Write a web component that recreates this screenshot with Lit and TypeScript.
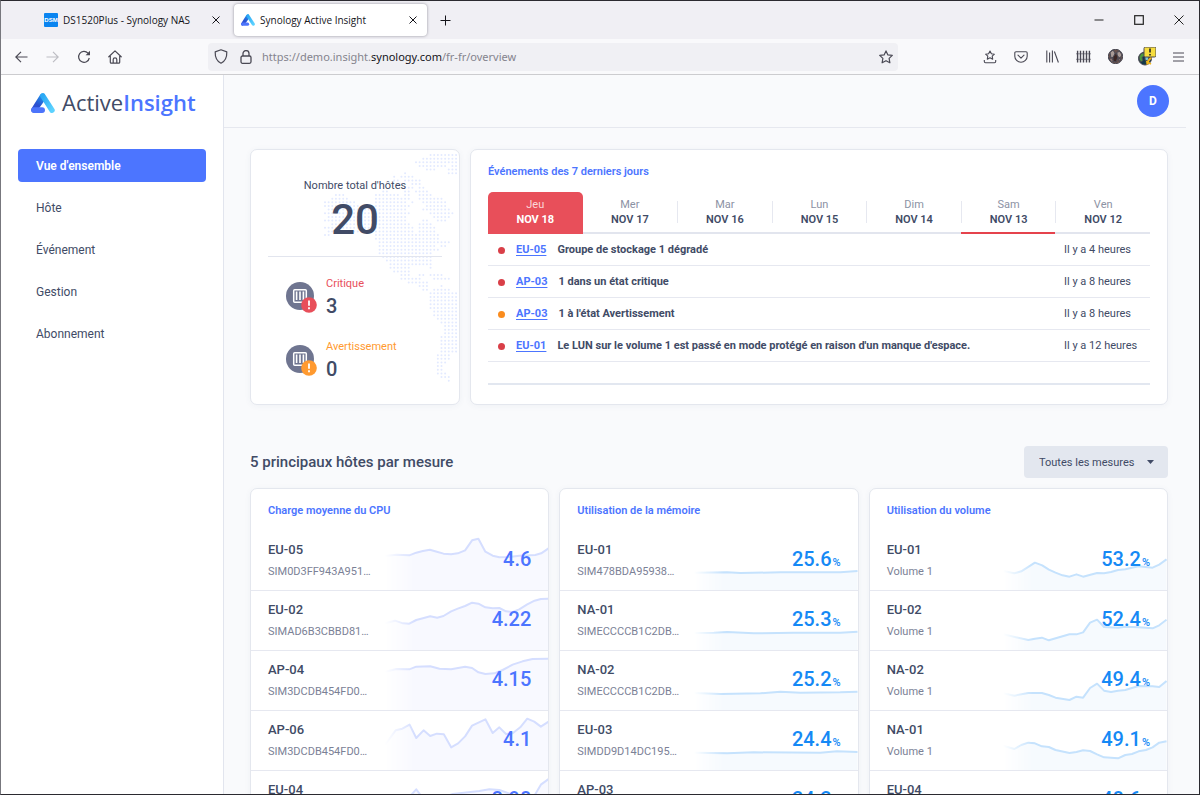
import { LitElement, html, svg, css } from "lit";
import { customElement, property, state } from "lit/decorators.js";
import { classMap } from "lit/directives/class-map.js";

type Point = [number, number];

interface HostMetric {
  host: string;
  detail: string;
  value: string;
  unit: string;
  trend: Point[];
}

interface HostEvent {
  level: "critical" | "warning";
  host: string;
  message: string;
  time: string;
}

const DAYS = [
  { name: "Jeu", date: "NOV 18", alert: true },
  { name: "Mer", date: "NOV 17", alert: false },
  { name: "Mar", date: "NOV 16", alert: false },
  { name: "Lun", date: "NOV 15", alert: false },
  { name: "Dim", date: "NOV 14", alert: false },
  { name: "Sam", date: "NOV 13", alert: true },
  { name: "Ven", date: "NOV 12", alert: false },
];

const EVENTS: HostEvent[] = [
  { level: "critical", host: "EU-05", message: "Groupe de stockage 1 dégradé", time: "Il y a 4 heures" },
  { level: "critical", host: "AP-03", message: "1 dans un état critique", time: "Il y a 8 heures" },
  { level: "warning", host: "AP-03", message: "1 à l'état Avertissement", time: "Il y a 8 heures" },
  {
    level: "critical",
    host: "EU-01",
    message: "Le LUN sur le volume 1 est passé en mode protégé en raison d'un manque d'espace.",
    time: "Il y a 12 heures",
  },
];

/* Trend coordinates live in a 492 x 177 box. */
const CPU: HostMetric[] = [
  {
    host: "EU-05", detail: "SIM0D3FF943A951…", value: "4.6", unit: "",
    trend: [[0, 75], [34, 71], [73, 73], [94, 65], [114, 60], [135, 56], [156, 62], [176, 68], [199, 70], [219, 67], [241, 58], [262, 28], [281, 23], [302, 62], [324, 74], [344, 79], [374, 78], [404, 74], [434, 73], [452, 72], [470, 67], [492, 52]],
  },
  {
    host: "EU-02", detail: "SIMAD6B3CBBD81…", value: "4.22", unit: "",
    trend: [[0, 97], [30, 89], [54, 97], [73, 98], [94, 87], [114, 82], [136, 76], [157, 80], [176, 75], [199, 61], [219, 53], [241, 45], [262, 35], [281, 38], [302, 49], [324, 52], [344, 51], [364, 61], [384, 63], [404, 55], [428, 40], [450, 29], [469, 24], [492, 23]],
  },
  {
    host: "AP-04", detail: "SIM3DCDB454FD0…", value: "4.15", unit: "",
    trend: [[0, 62], [34, 54], [73, 55], [94, 47], [136, 46], [164, 53], [199, 55], [241, 47], [262, 51], [281, 64], [302, 69], [329, 67], [354, 57], [384, 41], [414, 31], [444, 24], [492, 23]],
  },
  {
    host: "AP-06", detail: "SIM3DCDB454FD0…", value: "4.1", unit: "",
    trend: [[0, 101], [32, 58], [52, 53], [74, 41], [94, 81], [116, 58], [136, 75], [156, 68], [177, 70], [199, 109], [220, 97], [241, 76], [262, 44], [302, 25], [324, 66], [344, 49], [364, 69], [384, 67], [407, 49], [428, 23], [449, 32], [469, 47], [492, 32]],
  },
  {
    host: "EU-04", detail: "SIM1F6A20C7E3B9…", value: "3.98", unit: "",
    trend: [[0, 87], [74, 77], [94, 55], [109, 75], [164, 82], [204, 69], [284, 60], [314, 55], [344, 57], [384, 71], [424, 87], [449, 75], [469, 41], [492, 24]],
  },
];

const MEMORY: HostMetric[] = [
  { host: "EU-01", detail: "SIM478BDA95938…", value: "25.6", unit: "%", trend: [[0, 125], [100, 124], [140, 126], [260, 124], [440, 124], [492, 120]] },
  { host: "NA-01", detail: "SIMECCCCB1C2DB…", value: "25.3", unit: "%", trend: [[0, 126], [60, 125], [100, 123], [180, 127], [300, 125], [440, 125], [492, 122]] },
  { host: "NA-02", detail: "SIMECCCCB1C2DB…", value: "25.2", unit: "%", trend: [[0, 126], [80, 129], [200, 127], [260, 122], [320, 125], [440, 124], [492, 122]] },
  { host: "EU-03", detail: "SIMDD9D14DC195…", value: "24.4", unit: "%", trend: [[0, 125], [100, 127], [180, 124], [380, 125], [430, 121], [492, 123]] },
  { host: "AP-03", detail: "SIM90B2E6A14CF7…", value: "24.2", unit: "%", trend: [[0, 125], [492, 123]] },
];

const VOLUME: HostMetric[] = [
  {
    host: "EU-01", detail: "Volume 1", value: "53.2", unit: "%",
    trend: [[0, 120], [34, 127], [55, 121], [96, 95], [118, 103], [138, 116], [158, 125], [179, 133], [200, 137], [221, 130], [241, 137], [263, 131], [283, 126], [304, 127], [325, 123], [346, 117], [368, 115], [408, 106], [450, 110], [470, 101], [492, 85]],
  },
  {
    host: "EU-02", detail: "Volume 1", value: "52.4", unit: "%",
    trend: [[0, 130], [76, 147], [96, 143], [117, 140], [138, 148], [200, 130], [221, 130], [241, 124], [262, 95], [283, 86], [304, 108], [346, 110], [368, 107], [408, 109], [450, 112], [470, 103], [492, 86]],
  },
  {
    host: "NA-02", detail: "Volume 1", value: "49.4", unit: "%",
    trend: [[0, 127], [34, 134], [76, 126], [117, 126], [138, 132], [158, 140], [200, 147], [221, 137], [241, 140], [262, 111], [283, 98], [304, 119], [325, 123], [346, 119], [368, 117], [408, 105], [450, 106], [470, 108], [492, 90]],
  },
  {
    host: "NA-01", detail: "Volume 1", value: "49.1", unit: "%",
    trend: [[0, 104], [34, 114], [55, 102], [76, 95], [96, 97], [117, 106], [138, 108], [158, 117], [200, 126], [221, 123], [241, 118], [262, 120], [283, 130], [304, 139], [346, 142], [368, 132], [388, 129], [408, 121], [430, 117], [450, 109], [470, 95], [492, 91]],
  },
  { host: "EU-04", detail: "Volume 1", value: "48.6", unit: "%", trend: [[0, 110], [200, 130], [492, 90]] },
];

/* Dotted Americas: for every row, the inclusive column spans that hold dots. */
const MAP_ROWS: number[][] = [
  [29, 36], [27, 36], [25, 36], [26, 33, 35, 36], [28, 30, 34, 36], [22, 22, 34, 36],
  [19, 19, 21, 24], [19, 20, 22, 26], [20, 21, 24, 26], [22, 24, 26, 27], [16, 17, 22, 23, 25, 28],
  [3, 5, 14, 20, 22, 23, 26, 29], [2, 6, 14, 23, 26, 32], [0, 8, 14, 22, 24, 24, 27, 33],
  [0, 12, 14, 23, 28, 33], [1, 22, 27, 34], [0, 23, 29, 35], [1, 22, 30, 34], [0, 22, 27, 28, 31, 33],
  [2, 23, 26, 29], [0, 24, 26, 30], [1, 2, 8, 24, 26, 30], [0, 1, 14, 31], [14, 31], [15, 34],
  [15, 30, 32, 33], [15, 31], [15, 29], [16, 29], [17, 29], [18, 29], [18, 23, 29, 29], [19, 23],
  [21, 23, 26, 27, 29, 32], [21, 26, 30, 34], [23, 28], [26, 28, 32, 32], [27, 28, 30, 34],
  [29, 36], [29, 36], [29, 36], [29, 36], [29, 36], [30, 36], [30, 36], [31, 36], [32, 36],
  [33, 36], [33, 36], [33, 36], [32, 36], [32, 36], [32, 36], [32, 36], [32, 36], [31, 34],
  [31, 34], [31, 33], [31, 32], [31, 32], [31, 33], [32, 34], [34, 34],
];

const mapDots = (): string => {
  const pitch = 3.64;
  let d = "";
  MAP_ROWS.forEach((spans, row) => {
    for (let s = 0; s < spans.length; s += 2) {
      for (let col = spans[s]; col <= spans[s + 1]; col++) {
        d += `M${(col * pitch + 1).toFixed(2)} ${(row * pitch + 1).toFixed(2)}h.01`;
      }
    }
  });
  return d;
};

const brandMark = (id: string) => html`
  <svg class="brand-mark" viewBox="0 0 24 20" aria-hidden="true">
    <defs>
      <linearGradient id="${id}-l" x1="0.7" y1="0" x2="0.3" y2="1">
        <stop offset="0" stop-color="#1f9bf0"></stop>
        <stop offset="0.6" stop-color="#2a4fd0"></stop>
        <stop offset="1" stop-color="#3453d8"></stop>
      </linearGradient>
      <linearGradient id="${id}-r" x1="0" y1="0" x2="1" y2="1">
        <stop offset="0" stop-color="#2ba9f5"></stop>
        <stop offset="1" stop-color="#5cd2ff"></stop>
      </linearGradient>
    </defs>
    <path d="M9.3 1.6C10.2 0 12.6-.3 13.8 1.2L14 7 8.6 14.4 2.6 19.8C.4 19.3-.4 17.3.5 15.6z" fill="url(#${id}-l)"></path>
    <path d="M12 3.1 21 17.2" fill="none" stroke="url(#${id}-r)" stroke-width="5.4" stroke-linecap="round"></path>
    <rect x="0.2" y="14.2" width="13.8" height="5.8" rx="2.9" fill="#4c74fb"></rect>
  </svg>
`;

@customElement("browser-chrome")
export class BrowserChrome extends LitElement {
  @state() private address = "https://demo.insight.synology.com/fr-fr/overview";

  static styles = css`
    :host {
      display: block;
      font-family: "Open Sans", "Noto Sans", sans-serif;
      color: #15141a;
    }
    button {
      border: 0;
      padding: 0;
      background: none;
      color: inherit;
      font: inherit;
      display: grid;
      place-items: center;
    }
    svg {
      display: block;
      fill: none;
      stroke: currentColor;
    }
    .tabs {
      display: flex;
      align-items: center;
      height: 38px;
      background: #f0eff4;
      padding-left: 36px;
    }
    .tab {
      display: flex;
      align-items: center;
      box-sizing: border-box;
      width: 193px;
      height: 32px;
      padding: 0 7px;
      gap: 5px;
      border-radius: 4px;
    }
    .tab.active {
      background: #fff;
      box-shadow: 0 0 3px rgba(80, 80, 95, 0.6);
    }
    .tab-title {
      flex: 1;
      white-space: nowrap;
      font-size: 10px;
      text-align: left;
    }
    .first {
      margin-right: 4px;
    }
    .dsm {
      width: 14px;
      height: 14px;
      border-radius: 1px;
      background: #0a84f0;
      color: #fff;
      font: 700 6px/14px "Liberation Sans", sans-serif;
      text-align: center;
    }
    .brand-mark {
      width: 14px;
      height: 12px;
      stroke: none;
    }
    .tab-close {
      width: 14px;
      height: 20px;
    }
    .new-tab {
      width: 36px;
      height: 32px;
    }
    .window-buttons {
      margin-left: auto;
      display: flex;
      color: #222;
    }
    .window-buttons button {
      width: 40px;
      height: 38px;
    }
    .toolbar {
      display: flex;
      align-items: center;
      height: 35px;
      background: #f9f9fb;
      border-bottom: 1px solid #cccccf;
      color: #4a4954;
    }
    .nav {
      display: flex;
      padding-left: 5px;
    }
    .nav button {
      width: 31px;
      height: 28px;
    }
    .nav button:disabled {
      color: #bdbdc3;
    }
    .address {
      display: flex;
      align-items: center;
      flex: 0 1 690px;
      margin-left: 78px;
      height: 28px;
      border-radius: 4px;
      background: #f0f0f4;
    }
    .address button {
      width: 25px;
      height: 28px;
    }
    .url {
      flex: 1;
      display: grid;
      align-items: center;
      margin-left: 4px;
      padding-top: 1px;
      font-family: "Noto Sans", "Open Sans", sans-serif;
      font-size: 11px;
      color: #85848e;
    }
    .url > * {
      grid-area: 1 / 1;
    }
    .url input {
      width: 100%;
      border: 0;
      padding: 0;
      background: transparent;
      font: inherit;
      color: transparent;
      outline: 0;
    }
    .url span {
      pointer-events: none;
      white-space: nowrap;
    }
    .url b {
      font-weight: 400;
      color: #15141a;
    }
    .tools {
      margin-left: auto;
      display: flex;
      width: 220px;
      padding-right: 5px;
    }
    .tools button {
      flex: 1;
      height: 28px;
    }
  `;

  render() {
    return html`
      <div class="tabs">
        <div class="tab first">
          <span class="dsm">DSM</span>
          <span class="tab-title">DS1520Plus - Synology NAS</span>
          <button class="tab-close" aria-label="Fermer l'onglet">
            <svg width="8" height="8" viewBox="0 0 8 8"><path d="M.5.5l7 7M7.500.5l-7 7"></path></svg>
          </button>
        </div>
        <div class="tab active">
          ${brandMark("tab")}
          <span class="tab-title">Synology Active Insight</span>
          <button class="tab-close" aria-label="Fermer l'onglet">
            <svg width="8" height="8" viewBox="0 0 8 8"><path d="M.5.5l7 7M7.500.5l-7 7"></path></svg>
          </button>
        </div>
        <button class="new-tab" aria-label="Nouvel onglet">
          <svg width="11" height="11" viewBox="0 0 11 11" stroke="#444"><path d="M5.500.5v10M.5 5.500h10"></path></svg>
        </button>
        <div class="window-buttons">
          <button aria-label="Réduire"><svg width="10" height="10" viewBox="0 0 10 10"><path d="M.5 5h9"></path></svg></button>
          <button aria-label="Agrandir">
            <svg width="10" height="10" viewBox="0 0 10 10"><rect x=".7" y=".7" width="8.600" height="8.600" stroke-width="1.200"></rect></svg>
          </button>
          <button aria-label="Fermer"><svg width="10" height="10" viewBox="0 0 10 10"><path d="M.5.5l9 9M9.500.5l-9 9"></path></svg></button>
        </div>
      </div>
      <div class="toolbar">
        <div class="nav">
          <button aria-label="Précédent">
            <svg width="13" height="12" viewBox="0 0 13 12" stroke-width="1.200"><path d="M12.500 6H1M6 .8.8 6 6 11.200"></path></svg>
          </button>
          <button aria-label="Suivant" disabled>
            <svg width="13" height="12" viewBox="0 0 13 12" stroke-width="1.200"><path d="M.5 6H12M7 .8 12.200 6 7 11.200"></path></svg>
          </button>
          <button aria-label="Actualiser">
            <svg width="14" height="14" viewBox="0 0 14 14" stroke-width="1.200">
              <path d="M12.300 8A5.400 5.400 0 1 1 11 3.200L12.500 4.600"></path><path d="M13 .8v4.500H8.600z" fill="currentColor" stroke="none"></path>
            </svg>
          </button>
          <button aria-label="Accueil">
            <svg width="14" height="14" viewBox="0 0 14 14" stroke-width="1.200" stroke-linejoin="round" stroke-linecap="round">
              <path d="M.8 6.800 7 .9l6.200 5.900M2.300 6v6.200q0 1 1 1h7.400q1 0 1-1V6M5.200 13V9.600a1.800 1.800 0 0 1 3.600 0V13"></path>
            </svg>
          </button>
        </div>
        <div class="address">
          <button aria-label="Protection">
            <svg width="14" height="15" viewBox="0 0 14 15" stroke-width="1.200" stroke-linejoin="round">
              <path d="M7 .8 12.800 2.900C13 8.500 11.300 12 7 14.200 2.700 12 1 8.500 1.200 2.900z"></path>
            </svg>
          </button>
          <button aria-label="Sécurité">
            <svg width="12" height="14" viewBox="0 0 12 14" stroke-width="1.300">
              <rect x="1" y="6" width="10" height="7.300" rx="1.500"></rect><path d="M3 6V3.600a3 3 0 0 1 6 0V6"></path>
            </svg>
          </button>
          <label class="url">
            <span aria-hidden="true">https://demo.insight.<b>synology.com</b>/fr-fr/overview</span>
            <input aria-label="Adresse" .value=${this.address} />
          </label>
          <button aria-label="Marquer cette page">
            <svg width="14" height="14" viewBox="0 0 14 14" stroke-width="1.200" stroke-linejoin="round">
              <path d="M7 .9 8.900 4.900l4.400.5-3.200 3 .8 4.400L7 10.700l-3.900 2.100.8-4.400-3.200-3 4.400-.5z"></path>
            </svg>
          </button>
        </div>
        <div class="tools">
          <button aria-label="Marque-pages">
            <svg width="14" height="14" viewBox="0 0 14 14" stroke-width="1.100" stroke-linejoin="round">
              <path d="M7 1l1.400 2.800 3 .4L9.200 6.200l.5 3L7 7.800 4.300 9.200l.5-3L2.600 4.200l3-.4zM1.300 10v1.500q0 1.200 1.200 1.200h9q1.200 0 1.200-1.200V10"></path>
            </svg>
          </button>
          <button aria-label="Pocket">
            <svg width="14" height="12" viewBox="0 0 14 12" stroke-width="1.100" stroke-linecap="round" stroke-linejoin="round">
              <path d="M2 .8h10q1.200 0 1.200 1.200v3.200A6.200 6 0 0 1 .8 5.200V2Q.8.8 2 .8zM4 4.200l3 2.900 3-2.900"></path>
            </svg>
          </button>
          <button aria-label="Bibliothèque">
            <svg width="13" height="13" viewBox="0 0 13 13" stroke-width="1.100"><path d="M.8.5v12M3.600 2.500v10M6.400.5v12M8.400 1.500l4 11"></path></svg>
          </button>
          <button aria-label="Clôture">
            <svg width="15" height="13" viewBox="0 0 15 13">
              <path d="M1.600.8v11.700M4.500.8v11.700M7.500.8v11.700M10.500.8v11.700M13.400.8v11.700" stroke-width="1.400"></path><path d="M0 3.800h15M0 9.300h15" stroke-width=".6"></path>
            </svg>
          </button>
          <button aria-label="Profil">
            <svg width="15" height="15" viewBox="0 0 15 15" stroke="none">
              <circle cx="7.500" cy="7.500" r="7.200" fill="#66504c"></circle>
              <path d="M2 3.500 5 1l2 3-1 4-3 1zM9 3l3-.5 2 3.500-2 3-3-2z" fill="#a99a96"></path>
              <path d="M5 8l3-4 2 4-2 5-3-1z" fill="#3c2624"></path>
              <path d="M.8 9.500l3-.5 1.500 3-1.500 1.500zM10 10l3-1-1.500 3.500z" fill="#8d7570"></path>
            </svg>
          </button>
          <button aria-label="Extension, avertissement">
            <svg width="19" height="19" viewBox="0 0 19 19" stroke="none">
              <circle cx="8" cy="11.500" r="6.500" fill="#12384a"></circle>
              <path d="M2 10q1-4 5-4.500l1 3-3 2 1 3-2 1.500q-2-2-2-5z" fill="#4b9a3e"></path>
              <path d="M8 9l4 1-1 4-3-1z" fill="#7ec8d8"></path>
              <path d="M10 17.500q1.500-5 4.500-7.500" stroke="#f2b81b" stroke-width="2" fill="none"></path>
              <path d="M9 14.500l5 2.500" stroke="#f2b81b" stroke-width="1.600"></path>
              <rect x="7" y="0" width="12" height="10" rx="1.500" fill="#f7dd3d"></rect>
              <path d="M13 1.500v4M13 7v1.500" stroke="#222" stroke-width="1.600"></path>
            </svg>
          </button>
          <button aria-label="Menu">
            <svg width="11" height="10" viewBox="0 0 11 10"><path d="M0 1h11M0 5h11M0 9h11"></path></svg>
          </button>
        </div>
      </div>
    `;
  }
}

@customElement("metric-card")
export class MetricCard extends LitElement {
  @property() heading = "";
  @property() tone = "indigo";
  @property({ attribute: false }) hosts: HostMetric[] = [];

  static styles = css`
    :host {
      display: block;
      overflow: hidden;
      background: #fff;
      border: 1px solid #e4e7ee;
      border-radius: 7px;
      box-shadow: 0 1px 6px rgba(60, 70, 110, 0.05);
    }
    .indigo {
      --value: #4c75ff;
      --line: #d5deff;
      --area: #f8f9ff;
    }
    .azure {
      --value: #1589f5;
      --line: #c5e2fd;
      --area: #f6fafe;
    }
    h3 {
      margin: 0;
      padding: 14px 17px 12px;
      font-size: 11px;
      font-weight: 600;
      line-height: 16px;
      color: #4c75ff;
    }
    ul {
      list-style: none;
      margin: 0;
      padding: 0;
    }
    li {
      display: grid;
      grid-template-columns: 1fr auto;
      align-items: center;
      isolation: isolate;
      box-sizing: border-box;
      height: 60px;
      border-bottom: 1px solid #e6e8f0;
    }
    .trend {
      grid-area: 1 / 1 / 2 / 3;
      z-index: -1;
      justify-self: end;
      display: block;
      width: 55%;
      height: 59px;
      fill: none;
      -webkit-mask-image: linear-gradient(to right, transparent, #000 18%);
      mask-image: linear-gradient(to right, transparent, #000 18%);
    }
    .line {
      stroke: var(--line);
      stroke-width: 2;
      stroke-linejoin: round;
      vector-effect: non-scaling-stroke;
    }
    .area {
      fill: var(--area);
    }
    .label {
      grid-area: 1 / 1;
      padding-left: 17px;
    }
    .host {
      font-size: 13px;
      font-weight: 500;
      line-height: 18px;
      color: #414b66;
    }
    .detail {
      margin-top: 5px;
      font-size: 11px;
      line-height: 16px;
      color: #7b8196;
    }
    .value {
      grid-area: 1 / 2;
      padding: 0 17px 3px 0;
      font-size: 20px;
      line-height: 24px;
      font-weight: 500;
      color: var(--value);
    }
    .unit {
      margin-left: 1px;
      font-size: 11px;
      line-height: 12px;
    }
  `;

  private trend(points: Point[]) {
    const line = points.map(([x, y]) => `${x} ${y}`).join("L");
    return svg`
      <path class="area" d="M${line}V177H0z"></path>
      <path class="line" d="M${line}"></path>
    `;
  }

  render() {
    return html`
      <section class=${this.tone}>
        <h3>${this.heading}</h3>
        <ul>
          ${this.hosts.map(
            (item) => html`
              <li>
                <svg class="trend" viewBox="0 0 492 177" preserveAspectRatio="none" aria-hidden="true">${this.trend(item.trend)}</svg>
                <div class="label">
                  <div class="host">${item.host}</div>
                  <div class="detail">${item.detail}</div>
                </div>
                <div class="value">${item.value}${item.unit ? html`<span class="unit">${item.unit}</span>` : ""}</div>
              </li>
            `
          )}
        </ul>
      </section>
    `;
  }
}

@customElement("app-root")
export class AppRoot extends LitElement {
  @state() private day = 0;

  static styles = css`
    :host {
      display: flex;
      flex-direction: column;
      box-sizing: border-box;
      height: 100vh;
      overflow: hidden;
      border: 1px solid #2b2a30;
      border-left-color: #77777d;
      background: #f9fafc;
      font-family: Roboto, "Liberation Sans", sans-serif;
      font-size: 11px;
      line-height: 16px;
      color: #414b66;
    }
    button {
      border: 0;
      padding: 0;
      background: none;
      font: inherit;
      color: inherit;
    }
    browser-chrome {
      flex: none;
    }
    .page {
      flex: 1;
      min-height: 0;
      display: flex;
    }
    .sidebar {
      flex: 0 0 222px;
      background: #fff;
      border-right: 1px solid #e2e5ee;
    }
    .brand {
      display: flex;
      align-items: center;
      gap: 7px;
      height: 56px;
      padding-left: 30px;
      text-decoration: none;
      font: 500 22px/28px "Open Sans", "Noto Sans", sans-serif;
      color: #414b66;
    }
    .brand span {
      padding-bottom: 2px;
    }
    .brand strong {
      font-weight: 600;
      color: #4c75ff;
    }
    .brand-mark {
      width: 24px;
      height: 20px;
    }
    nav {
      display: flex;
      flex-direction: column;
      gap: 9px;
      padding: 18px 17px;
      font-size: 12px;
    }
    nav a {
      padding: 1px 18px 0;
      line-height: 32px;
      border-radius: 4px;
      text-decoration: none;
      color: inherit;
    }
    nav a.current {
      background: #4c75ff;
      color: #fff;
      font-weight: 600;
    }
    .main {
      flex: 1;
      min-width: 0;
      padding-right: 13px;
      overflow: hidden;
    }
    header {
      display: flex;
      justify-content: flex-end;
      align-items: center;
      height: 52px;
      padding-right: 17px;
      border-bottom: 1px solid #e6e8ef;
    }
    .avatar {
      width: 32px;
      height: 32px;
      border-radius: 50%;
      background: #4c75ff;
      color: #fff;
      font-size: 12px;
      font-weight: 700;
    }
    .content {
      padding: 21px 18px 0 26px;
    }
    .overview {
      display: grid;
      grid-template-columns: 210px 1fr;
      gap: 10px;
    }
    .card {
      box-sizing: border-box;
      min-height: 256px;
      background-color: #fff;
      border: 1px solid #e4e7ee;
      border-radius: 7px;
      box-shadow: 0 1px 6px rgba(60, 70, 110, 0.05);
      padding: 0 17px;
    }
    .totals {
      display: grid;
      grid-template-rows: 1fr;
    }
    .world {
      grid-area: 1 / 1;
      justify-self: end;
      width: 133px;
      height: 229px;
      margin: 4px -15px 0 0;
      fill: none;
      stroke: #e3eaff;
      stroke-width: 2;
      stroke-linecap: round;
    }
    .figures {
      grid-area: 1 / 1;
      padding-top: 28px;
    }
    .total {
      text-align: center;
      padding-bottom: 11px;
      border-bottom: 1px solid #e2e5ee;
    }
    .total-number {
      font-size: 42px;
      line-height: 51px;
      font-weight: 500;
    }
    .status {
      display: flex;
      align-items: center;
      gap: 9px;
      margin-top: 19px;
      padding-left: 18px;
    }
    .status + .status {
      margin-top: 21px;
    }
    .status svg {
      width: 31px;
      height: 31px;
    }
    .count {
      margin-top: 2px;
      font-size: 20px;
      line-height: 24px;
      font-weight: 500;
    }
    .critical {
      color: #e84f5a;
    }
    .warning {
      color: #ff9a30;
    }
    h2,
    h3 {
      margin: 0;
      font-weight: 500;
    }
    .events h3 {
      padding: 14px 0 12px;
      font-size: 11px;
      font-weight: 600;
      line-height: 16px;
      color: #4c75ff;
    }
    .days {
      display: grid;
      grid-template-columns: repeat(7, 1fr);
    }
    .day {
      height: 42px;
      display: flex;
      align-items: center;
      border-bottom: 2px solid #e2e5ee;
      box-sizing: border-box;
    }
    .day-text {
      flex: 1;
      text-align: center;
      font-weight: 600;
      line-height: 15px;
    }
    .day-name {
      display: block;
      font-weight: 400;
      color: #8c92a4;
    }
    .day + .day:not(.selected + .day) .day-text {
      border-left: 1px solid #e6e8f0;
      height: 22px;
      display: flex;
      flex-direction: column;
      justify-content: center;
    }
    .day.alert {
      border-bottom-color: #e5434c;
    }
    .day.selected {
      background: #e84f5a;
      border-color: #e84f5a;
      border-radius: 5px 5px 0 0;
      color: #fff;
    }
    .day.selected .day-name {
      color: #fbd5d8;
    }
    .day.selected .day-text {
      font-weight: 700;
    }
    table {
      width: 100%;
      border-collapse: collapse;
      table-layout: fixed;
    }
    .time-col {
      width: 86px;
    }
    td {
      height: 30px;
      padding: 1px 0 0;
      border-bottom: 1px solid #e6e8f0;
    }
    .event {
      display: flex;
      align-items: center;
      gap: 11px;
      padding-left: 10px;
      font-weight: 700;
      white-space: nowrap;
    }
    .event a {
      color: #4c75ff;
      text-underline-offset: 2px;
    }
    .dot {
      width: 7px;
      height: 7px;
      border-radius: 50%;
      background: #d93f48;
    }
    .dot.warn {
      background: #fa8c1e;
    }
    .list-end {
      height: 21px;
      border-bottom: 2px solid #e2e7f0;
    }
    .section-head {
      display: flex;
      align-items: center;
      justify-content: space-between;
      margin: 41px 0 10px;
    }
    h2 {
      font-size: 15px;
      line-height: 20px;
    }
    .picker {
      display: grid;
      align-items: center;
    }
    .picker > * {
      grid-area: 1 / 1;
    }
    .picker select {
      appearance: none;
      -webkit-appearance: none;
      height: 32px;
      padding: 1px 33px 0 15px;
      border: 0;
      border-radius: 4px;
      background: #e3e7ef;
      font: inherit;
      color: inherit;
    }
    .picker svg {
      justify-self: end;
      margin-right: 14px;
      width: 7px;
      height: 4px;
      fill: currentColor;
      pointer-events: none;
    }
    .metrics {
      display: grid;
      grid-template-columns: repeat(3, 1fr);
      gap: 10px;
    }
  `;

  private statusIcon(color: string) {
    return html`
      <svg viewBox="0 0 31 31" aria-hidden="true">
        <circle cx="14" cy="14" r="14" fill="#6f7590"></circle>
        <rect x="7.700" y="7.700" width="12.600" height="12.600" rx="1" fill="none" stroke="#fff" stroke-width="1.500"></rect>
        <path d="M10.600 9.500v8.500M14 9.500v8.500M17.400 9.500v8.500" stroke="#fff" stroke-width="1.600"></path>
        <circle cx="23" cy="23" r="7.800" fill=${color}></circle>
        <path d="M23 18.500v5.200M23 25.300v1.900" stroke="#fff" stroke-width="1.800"></path>
      </svg>
    `;
  }

  render() {
    return html`
      <browser-chrome></browser-chrome>
      <div class="page">
        <aside class="sidebar">
          <a class="brand" href="#overview">${brandMark("logo")}<span>Active<strong>Insight</strong></span></a>
          <nav>
            <a class="current" href="#overview" aria-current="page">Vue d'ensemble</a>
            <a href="#host">Hôte</a>
            <a href="#event">Événement</a>
            <a href="#management">Gestion</a>
            <a href="#subscription">Abonnement</a>
          </nav>
        </aside>
        <main class="main">
          <header><button class="avatar" aria-label="Compte D">D</button></header>
          <div class="content">
            <div class="overview">
              <section class="card totals">
                <svg class="world" viewBox="0 0 133 229" aria-hidden="true"><path d=${mapDots()}></path></svg>
                <div class="figures">
                  <div class="total">
                    <div>Nombre total d'hôtes</div>
                    <div class="total-number">20</div>
                  </div>
                  <div class="status">
                    ${this.statusIcon("#e84f5a")}
                    <div><div class="critical">Critique</div><div class="count">3</div></div>
                  </div>
                  <div class="status">
                    ${this.statusIcon("#ff9a30")}
                    <div><div class="warning">Avertissement</div><div class="count">0</div></div>
                  </div>
                </div>
              </section>
              <section class="card events">
                <h3>Événements des 7 derniers jours</h3>
                <div class="days">
                  ${DAYS.map(
                    (d, i) => html`
                      <button
                        class=${classMap({ day: true, alert: d.alert, selected: i === this.day })}
                        @click=${() => (this.day = i)}
                      >
                        <span class="day-text"><span class="day-name">${d.name}</span>${d.date}</span>
                      </button>
                    `
                  )}
                </div>
                <table>
                  <colgroup><col /><col class="time-col" /></colgroup>
                  <tbody>
                    ${EVENTS.map(
                      (e) => html`
                        <tr>
                          <td>
                            <div class="event">
                              <span class=${classMap({ dot: true, warn: e.level === "warning" })}></span>
                              <a href="#host">${e.host}</a>
                              <span>${e.message}</span>
                            </div>
                          </td>
                          <td>${e.time}</td>
                        </tr>
                      `
                    )}
                  </tbody>
                </table>
                <div class="list-end"></div>
              </section>
            </div>
            <div class="section-head">
              <h2>5 principaux hôtes par mesure</h2>
              <div class="picker">
                <select aria-label="Mesures affichées">
                  <option>Toutes les mesures</option>
                </select>
                <svg viewBox="0 0 7 4" aria-hidden="true"><path d="M0 0h7L3.500 4z"></path></svg>
              </div>
            </div>
            <div class="metrics">
              <metric-card heading="Charge moyenne du CPU" tone="indigo" .hosts=${CPU}></metric-card>
              <metric-card heading="Utilisation de la mémoire" tone="azure" .hosts=${MEMORY}></metric-card>
              <metric-card heading="Utilisation du volume" tone="azure" .hosts=${VOLUME}></metric-card>
            </div>
          </div>
        </main>
      </div>
    `;
  }
}
